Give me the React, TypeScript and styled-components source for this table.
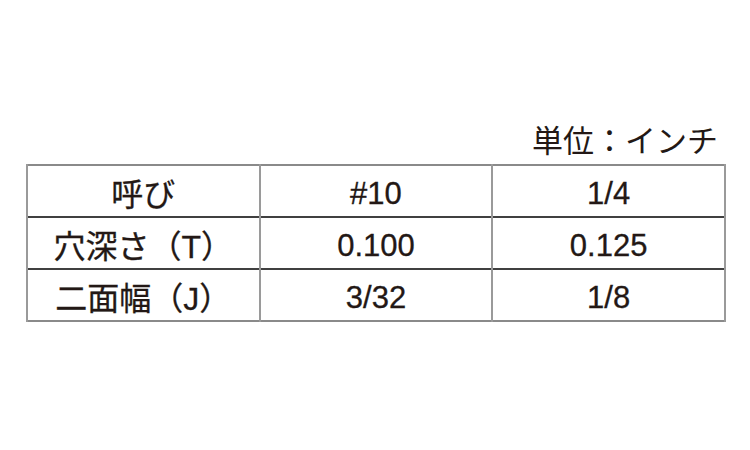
import styled, { createGlobalStyle } from 'styled-components'

const GlobalStyle = createGlobalStyle`
  html, body {
    margin: 0;
    padding: 0;
    background: #ffffff;
  }
`

const Page = styled.div`
  width: 750px;
  height: 450px;
  padding: 121px 0 0 26px;
  box-sizing: border-box;
  font-family: "Liberation Sans", "Noto Sans CJK JP", sans-serif;
  color: #231815;
`

const Sheet = styled.div`
  width: 700px;
  display: flex;
  flex-direction: column;
`

const UnitLabel = styled.div`
  align-self: flex-end;
  padding-right: 8px;
  font-family: "Noto Sans CJK JP", sans-serif;
  font-size: 31px;
  line-height: 36px;
  height: 36px;
  margin-bottom: 7px;
`

const SpecTable = styled.table`
  width: 700px;
  border-collapse: collapse;
  table-layout: fixed;
  border-top: 2px solid #8a8a8a;
  border-bottom: 2px solid #8a8a8a;
`

const Row = styled.tr<{ first?: boolean }>`
  border-top: ${({ first }) => (first ? 'none' : '2px solid #404040')};
`

const Cell = styled.td<{ label?: boolean }>`
  height: 52px;
  padding: 0;
  text-align: center;
  vertical-align: middle;
  border-left: 2px solid #9a9a9a;
  border-right: 2px solid #9a9a9a;
  font-size: ${({ label }) => (label ? '32px' : '31px')};
  line-height: 1;
  padding-top: 4px;
  box-sizing: border-box;
  -webkit-text-stroke: 0.3px #231815;
`

const Cjk = styled.span`
  font-family: "Noto Sans CJK JP", sans-serif;
`

const Latin = styled.span`
  font-family: "Liberation Sans", sans-serif;
  font-size: 32px;
`

const rows = [
  { label: <Cjk>呼び</Cjk>, a: '#10', b: '1/4' },
  {
    label: (
      <>
        <Cjk>穴深さ（</Cjk>
        <Latin>T</Latin>
        <Cjk>）</Cjk>
      </>
    ),
    a: '0.100',
    b: '0.125',
  },
  {
    label: (
      <>
        <Cjk>二面幅（</Cjk>
        <Latin>J</Latin>
        <Cjk>）</Cjk>
      </>
    ),
    a: '3/32',
    b: '1/8',
  },
]

export default function App() {
  return (
    <>
      <GlobalStyle />
      <Page>
        <Sheet>
          <UnitLabel>単位：インチ</UnitLabel>
          <SpecTable>
            <tbody>
              {rows.map((r, i) => (
                <Row key={i} first={i === 0}>
                  <Cell label>{r.label}</Cell>
                  <Cell>{r.a}</Cell>
                  <Cell>{r.b}</Cell>
                </Row>
              ))}
            </tbody>
          </SpecTable>
        </Sheet>
      </Page>
    </>
  )
}
